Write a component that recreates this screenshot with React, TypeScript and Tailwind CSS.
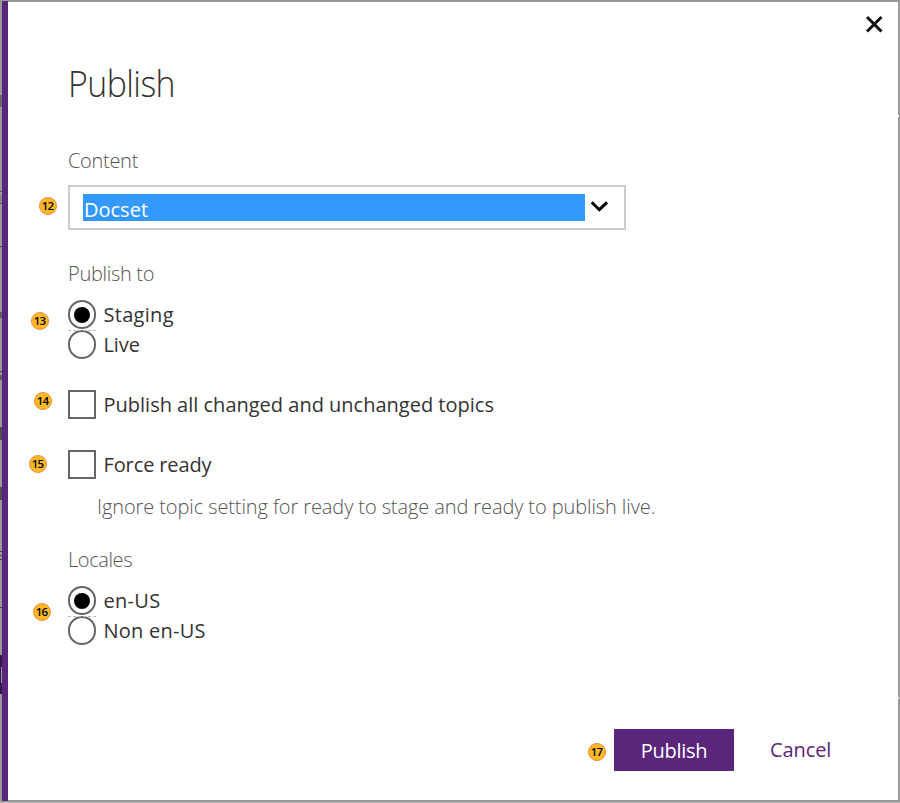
import type { ReactNode } from "react";

const marks = [
  { y: 95, h: 12, c: "#6b6b6b" },
  { y: 191, h: 1, c: "#555" },
  { y: 195, h: 7, c: "#858585" },
  { y: 203, h: 1, c: "#555" },
  { y: 246, h: 1, c: "#444" },
  { y: 312, h: 6, c: "#606060" },
  { y: 371, h: 1, c: "#444" },
  { y: 375, h: 5, c: "#606060" },
  { y: 427, h: 13, c: "#4e4e4e" },
  { y: 487, h: 13, c: "#4e4e4e" },
  { y: 551, h: 1, c: "#444" },
  { y: 555, h: 1, c: "#555" },
  { y: 559, h: 1, c: "#444" },
  { y: 607, h: 1, c: "#444" },
  { y: 655, h: 39, c: "#30184a" },
];

function Badge({ n, className }: { n: number; className: string }) {
  return (
    <span
      className={`absolute flex h-[18px] w-[18px] items-center justify-center rounded-full border border-[#f08a3c] bg-[#fdb924] pr-px pb-px font-['Open_Sans',sans-serif] text-[11.5px] leading-none font-semibold tracking-[-0.8px] text-black ${className}`}
    >
      {n}
    </span>
  );
}

function Radio({ checked, children, className }: { checked?: boolean; children: ReactNode; className: string }) {
  return (
    <div className="flex h-[30px]">
      <span className="flex h-[29px] w-7 items-center justify-center rounded-full border-2 border-[#666]">
        {checked && <span className="h-4 w-4 rounded-full bg-black" />}
      </span>
      <span className={`ml-[7.5px] leading-[30px] whitespace-nowrap ${className}`}>{children}</span>
    </div>
  );
}

function Check({ children, className }: { children: ReactNode; className: string }) {
  return (
    <div className="flex h-[30px]">
      <span className="h-[29px] w-7 border-2 border-[#666]" />
      <span className={`ml-[7.5px] leading-[30px] whitespace-nowrap ${className}`}>{children}</span>
    </div>
  );
}

function Focus() {
  return <span className="absolute top-[30px] left-0 h-px w-7 border-t border-dashed border-[#bbb]" />;
}

export default function App() {
  return (
    <div className="flex h-[803px] w-[900px] flex-col overflow-hidden bg-[#999] font-['Open_Sans','Noto_Sans',sans-serif] text-[20px] text-[#333]">
      <div className="flex h-[801px] pt-px">
        <svg className="h-[800px] w-[2px] shrink-0" viewBox="0 1 2 800">
          {marks.map((m) => (
            <rect key={m.y} x="0" y={m.y} width="2" height={m.h} fill={m.c} />
          ))}
          <rect x="1" y="667" width="1" height="16" fill="#999" />
        </svg>
        <div className="w-1.5 shrink-0 bg-[#59267c]" />
        <main className="relative mt-px mb-px flex w-[890px] flex-col bg-white pl-[60px]">
          <svg className="absolute top-[13px] left-[857px] h-5 w-5" viewBox="0 0 20 20" fill="none" stroke="#111" strokeWidth="3">
            <path d="M2 2 16.5 16.5M16.5 2 2 16.5" />
          </svg>
          <span className="absolute top-[113px] left-[890px] h-0.5 w-px bg-white" />
          <span className="absolute top-[695px] left-[890px] h-0.5 w-px bg-white" />

          <h1 className="mt-[57px] h-[50px] origin-left scale-x-[0.94] text-[36px] leading-[50px] font-light tracking-[-0.6px]">
            Publish
          </h1>

          <div className="mt-[37px] h-[30px] leading-[30px] font-light tracking-[-0.3px] text-[#555]">Content</div>
          <div className="relative mt-[9px] flex h-[45px] w-[558px] border-2 border-[#ccc] pt-[7px] pl-[13px]">
            <span className="h-[27px] w-[502px] bg-[#39f] pl-px leading-[31px] tracking-[0px] text-white">Docset</span>
            <svg className="mt-[5px] ml-[5px] h-4 w-5" viewBox="0 0 20 16" fill="none" stroke="#000" strokeWidth="3">
              <path d="M1.7 3.3 9.3 10.7 17 3.3" />
            </svg>
            <Badge n={12} className="top-[10px] left-[-31px]" />
          </div>

          <div className="mt-[29px] h-[30px] leading-[30px] font-light tracking-[-0.3px] text-[#555]">Publish to</div>
          <div className="relative mt-[11px]">
            <Radio checked className="tracking-[0.3px]">Staging</Radio>
            <Radio className="tracking-[-0.1px]">Live</Radio>
            <Focus />
            <Badge n={13} className="top-3 left-[-37px]" />
          </div>

          <div className="relative mt-[30px]">
            <Check className="tracking-[0px]">Publish all changed and unchanged topics</Check>
            <Badge n={14} className="top-[2px] left-[-34px]" />
          </div>

          <div className="relative mt-[30px]">
            <Check className="tracking-[-0.12px]">Force ready</Check>
            <Badge n={15} className="top-[5px] left-[-39px]" />
          </div>
          <p className="mt-[12px] ml-[29px] h-[30px] leading-[30px] font-light tracking-[-0.1px] text-[#555]">
            Ignore topic setting for ready to stage and ready to publish live.
          </p>

          <div className="mt-[23px] h-[30px] leading-[30px] font-light tracking-[-0.4px] text-[#555]">Locales</div>
          <div className="relative mt-[11px]">
            <Radio checked className="tracking-[0.3px]">en-US</Radio>
            <Radio className="tracking-[0.25px]">Non en-US</Radio>
            <Focus />
            <Badge n={16} className="top-[17px] left-[-35px]" />
          </div>

          <div className="relative mt-[83px] ml-[546px] flex h-[42px]">
            <button className="h-[42px] w-[120px] bg-[#59267c] pt-px leading-[42px] tracking-[-0.3px] text-white">Publish</button>
            <button className="ml-9 h-[42px] leading-[40px] tracking-[-0.1px] text-[#59267c]">Cancel</button>
            <Badge n={17} className="top-[14px] left-[-26px]" />
          </div>
        </main>
      </div>
      <div className="mt-px h-px bg-[#bbb]" />
    </div>
  );
}
